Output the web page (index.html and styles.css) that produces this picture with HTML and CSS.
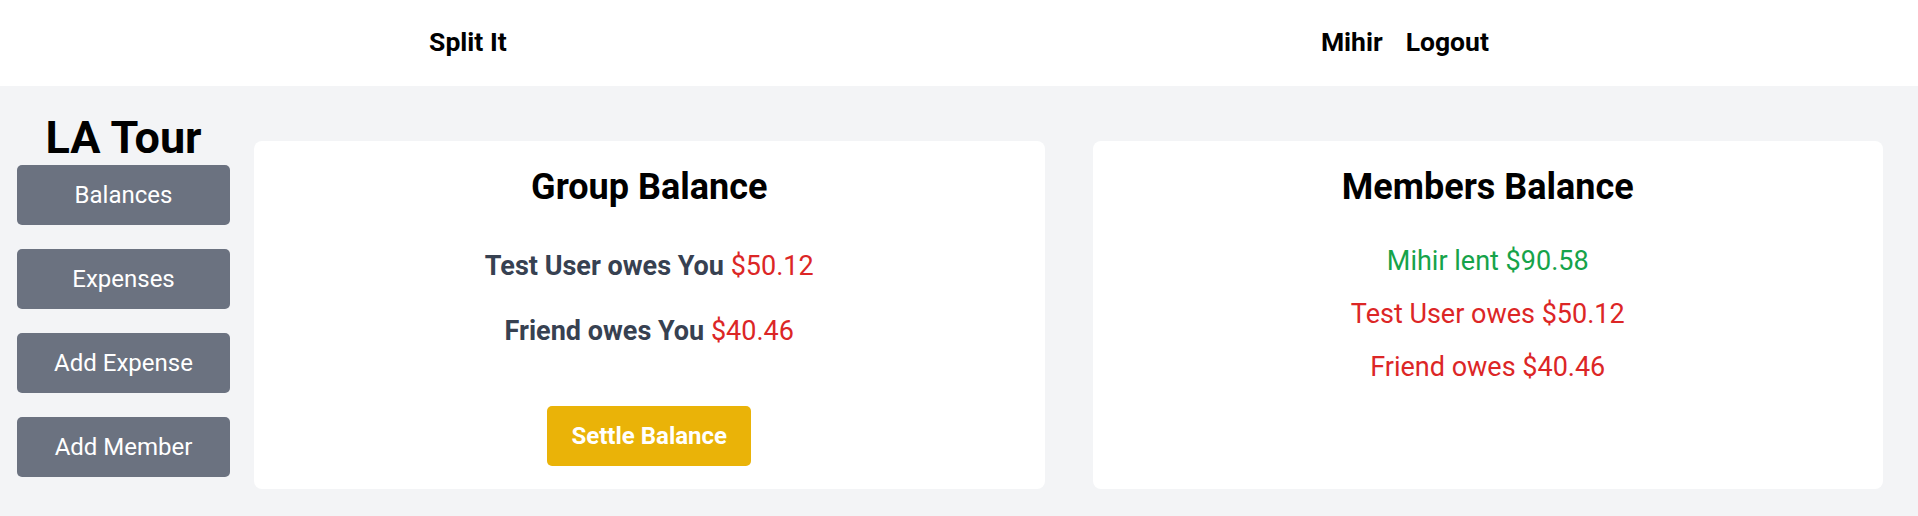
FILE: index.html
```html
<!DOCTYPE html>
<html lang="en">
<head>
<meta charset="utf-8">
<title>Split It</title>
<link rel="stylesheet" href="styles.css">
</head>
<body>
<header class="topbar">
  <div class="brand">Split It</div>
  <nav class="user-nav">
    <span class="nav-item">Mihir</span>
    <span class="nav-item">Logout</span>
  </nav>
</header>
<main class="main">
  <aside class="sidebar">
    <h1 class="group-name">LA Tour</h1>
    <button class="side-btn">Balances</button>
    <button class="side-btn">Expenses</button>
    <button class="side-btn">Add Expense</button>
    <button class="side-btn">Add Member</button>
  </aside>
  <section class="cards">
    <div class="card">
      <h2 class="card-title">Group Balance</h2>
      <div class="group-lines">
        <p class="owe-line">Test User owes You <span class="red amount">$50.12</span></p>
        <p class="owe-line">Friend owes You <span class="red amount">$40.46</span></p>
      </div>
      <button class="settle-btn">Settle Balance</button>
    </div>
    <div class="card">
      <h2 class="card-title">Members Balance</h2>
      <div class="member-lines">
        <p class="member-line green">Mihir lent $90.58</p>
        <p class="member-line red">Test User owes $50.12</p>
        <p class="member-line red">Friend owes $40.46</p>
      </div>
    </div>
  </section>
</main>
</body>
</html>
```
FILE: styles.css
```css
* { box-sizing: border-box; }
html, body { margin: 0; padding: 0; }
body {
  font-family: Roboto, "Liberation Sans", sans-serif;
  background: #f3f4f6;
  color: #000;
  height: 516px;
  overflow: hidden;
}
.topbar {
  height: 86px;
  background: #ffffff;
  display: flex;
  align-items: center;
  justify-content: space-around;
  padding: 0 22px 3px;
}
.brand, .nav-item {
  font-size: 26.5px;
  line-height: 32px;
  font-weight: 700;
}
.user-nav {
  display: flex;
  gap: 23px;
}
.main {
  display: flex;
  align-items: flex-start;
  padding: 28px 35px 0 17px;
  gap: 24px;
}
.sidebar {
  width: 213px;
  display: flex;
  flex-direction: column;
  gap: 24px;
}
.group-name {
  margin: 0 0 -21px 0;
  font-size: 45px;
  line-height: 48px;
  font-weight: 700;
  text-align: center;
}
.side-btn {
  height: 60px;
  border: none;
  border-radius: 5px;
  background: #6b7280;
  color: #ffffff;
  font-family: inherit;
  font-size: 24px;
  line-height: 32px;
  padding: 0;
}
.cards {
  flex: 1;
  display: flex;
  gap: 48px;
  margin-top: 27px;
}
.card {
  flex: 1;
  height: 348px;
  background: #ffffff;
  border-radius: 8px;
  padding-top: 26px;
  display: flex;
  flex-direction: column;
  align-items: center;
}
.card-title {
  margin: 0;
  font-size: 36px;
  line-height: 40px;
  font-weight: 700;
}
.group-lines {
  margin-top: 41px;
  display: flex;
  flex-direction: column;
  gap: 29px;
}
.owe-line {
  margin: 0;
  font-size: 27px;
  line-height: 36px;
  font-weight: 700;
  color: #374151;
  text-align: center;
}
.amount { font-weight: 400; }
.settle-btn {
  margin-top: 57px;
  height: 60px;
  padding: 0 24px;
  border: none;
  border-radius: 5px;
  background: #eab308;
  color: #ffffff;
  font-family: inherit;
  font-size: 24px;
  line-height: 32px;
  font-weight: 700;
}
.member-lines {
  margin-top: 36px;
  display: flex;
  flex-direction: column;
  gap: 17px;
}
.member-line {
  margin: 0;
  font-size: 27px;
  line-height: 36px;
  text-align: center;
}
.red { color: #dc2626; }
.green { color: #16a34a; }
```
